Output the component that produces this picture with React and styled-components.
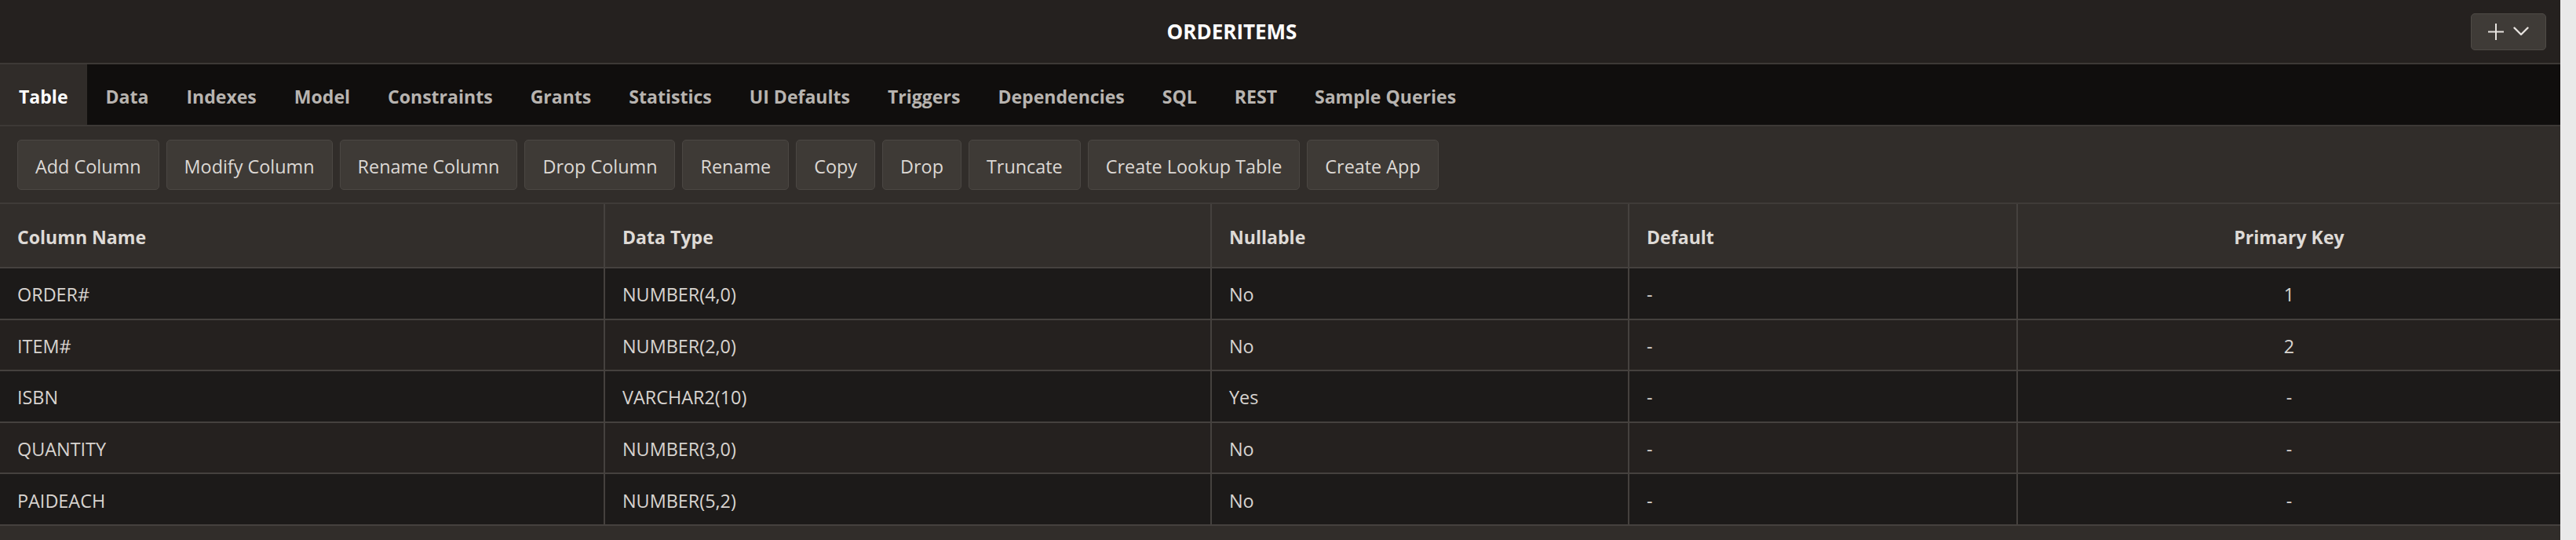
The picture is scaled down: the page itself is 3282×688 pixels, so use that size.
import React from 'react';
import styled, { createGlobalStyle } from 'styled-components';

const FONT = '"Open Sans", "Noto Sans", Lato, sans-serif';

const GlobalStyle = createGlobalStyle`
  html, body { margin: 0; padding: 0; background: #e9e9e9; }
  body { font-family: ${FONT}; -webkit-font-smoothing: antialiased; }
  *, *::before, *::after { box-sizing: border-box; }
`;

const Page = styled.div`
  margin-right: 20px;
  min-height: 100vh;
  background: #312d2a;
  color: #dcd8d4;
`;

const Header = styled.header`
  display: flex;
  align-items: center;
  height: 82px;
  padding-right: 18px;
  background: #25211f;
  border-bottom: 2px solid #3d3936;
`;

const Title = styled.h1`
  flex: 1;
  margin: 0 9px 0 0;
  text-align: center;
  font-size: 26px;
  font-weight: 700;
  color: #ffffff;
`;

const IconButton = styled.button`
  display: flex;
  align-items: center;
  gap: 12px;
  height: 47px;
  padding: 0 21px;
  border: 1px solid #4e4a46;
  border-radius: 5px;
  background: #3f3b37;
  cursor: pointer;
`;

const Tabs = styled.nav`
  display: flex;
  height: 79px;
  background: #100e0d;
  border-bottom: 2px solid #3d3936;
`;

const Tab = styled.div`
  display: flex;
  align-items: center;
  padding: 5px 24px 0;
  font-size: 23.05px;
  font-weight: 700;
  color: ${(p) => (p.$active ? '#ffffff' : '#b8b4b0')};
  background: ${(p) => (p.$active ? '#302c29' : 'transparent')};
`;

const Toolbar = styled.div`
  display: flex;
  gap: 9px;
  padding: 17px 22px 16px;
  background: #312d2a;
  border-bottom: 2px solid #3f3b38;
`;

const ToolButton = styled.button`
  height: 64px;
  padding: 3px 22px 0;
  border: 1px solid #4b4743;
  border-radius: 5px;
  background: #3e3a36;
  color: #dcd8d4;
  font-family: ${FONT};
  font-size: 23.4px;
  font-weight: 400;
  cursor: pointer;
`;

const GridRow = styled.div`
  display: grid;
  grid-template-columns: 769px 773px 532px 495px 1fr;
  height: ${(p) => (p.$head ? '82px' : '65.6px')};
  border-bottom: 2px solid #45413e;
  background: ${(p) => (p.$head ? '#322e2b' : p.$odd ? '#25211f' : '#1c1a19')};
`;

const Cell = styled.div`
  display: flex;
  align-items: center;
  justify-content: ${(p) => (p.$center ? 'center' : 'flex-start')};
  padding: 3px 22px 0;
  font-size: ${(p) => (p.$head ? '23.1px' : '23.4px')};
  font-weight: ${(p) => (p.$head ? 700 : 400)};
  color: ${(p) => (p.$head ? '#dedad6' : '#d8d4d0')};
  & + & {
    border-left: 2px solid #45413e;
  }
`;

const PlusIcon = () => (
  <svg width="20" height="21" viewBox="0 0 20 21" fill="none">
    <path d="M10 0V21M0 10.5H20" stroke="#e6e2de" strokeWidth="2" />
  </svg>
);

const ChevronIcon = () => (
  <svg width="20" height="12" viewBox="0 0 20 12" fill="none">
    <path d="M1.5 1.5L10 10L18.5 1.5" stroke="#e6e2de" strokeWidth="2.4" strokeLinecap="round" strokeLinejoin="round" />
  </svg>
);

const tabs = ['Table', 'Data', 'Indexes', 'Model', 'Constraints', 'Grants', 'Statistics', 'UI Defaults', 'Triggers', 'Dependencies', 'SQL', 'REST', 'Sample Queries'];
const actions = ['Add Column', 'Modify Column', 'Rename Column', 'Drop Column', 'Rename', 'Copy', 'Drop', 'Truncate', 'Create Lookup Table', 'Create App'];
const columns = ['Column Name', 'Data Type', 'Nullable', 'Default', 'Primary Key'];
const rows = [
  ['ORDER#', 'NUMBER(4,0)', 'No', '-', '1'],
  ['ITEM#', 'NUMBER(2,0)', 'No', '-', '2'],
  ['ISBN', 'VARCHAR2(10)', 'Yes', '-', '-'],
  ['QUANTITY', 'NUMBER(3,0)', 'No', '-', '-'],
  ['PAIDEACH', 'NUMBER(5,2)', 'No', '-', '-'],
];

export default function App() {
  return (
    <>
      <GlobalStyle />
      <Page>
        <Header>
          <Title>ORDERITEMS</Title>
          <IconButton aria-label="Add">
            <PlusIcon />
            <ChevronIcon />
          </IconButton>
        </Header>
        <Tabs>
          {tabs.map((t, i) => (
            <Tab key={t} $active={i === 0}>{t}</Tab>
          ))}
        </Tabs>
        <Toolbar>
          {actions.map((a) => (
            <ToolButton key={a}>{a}</ToolButton>
          ))}
        </Toolbar>
        <div>
          <GridRow $head>
            {columns.map((c, i) => (
              <Cell key={c} $head $center={i === 4}>{c}</Cell>
            ))}
          </GridRow>
          {rows.map((r, ri) => (
            <GridRow key={r[0]} $odd={ri % 2 === 1}>
              {r.map((v, ci) => (
                <Cell key={ci} $center={ci === 4}>{v}</Cell>
              ))}
            </GridRow>
          ))}
        </div>
      </Page>
    </>
  );
}
